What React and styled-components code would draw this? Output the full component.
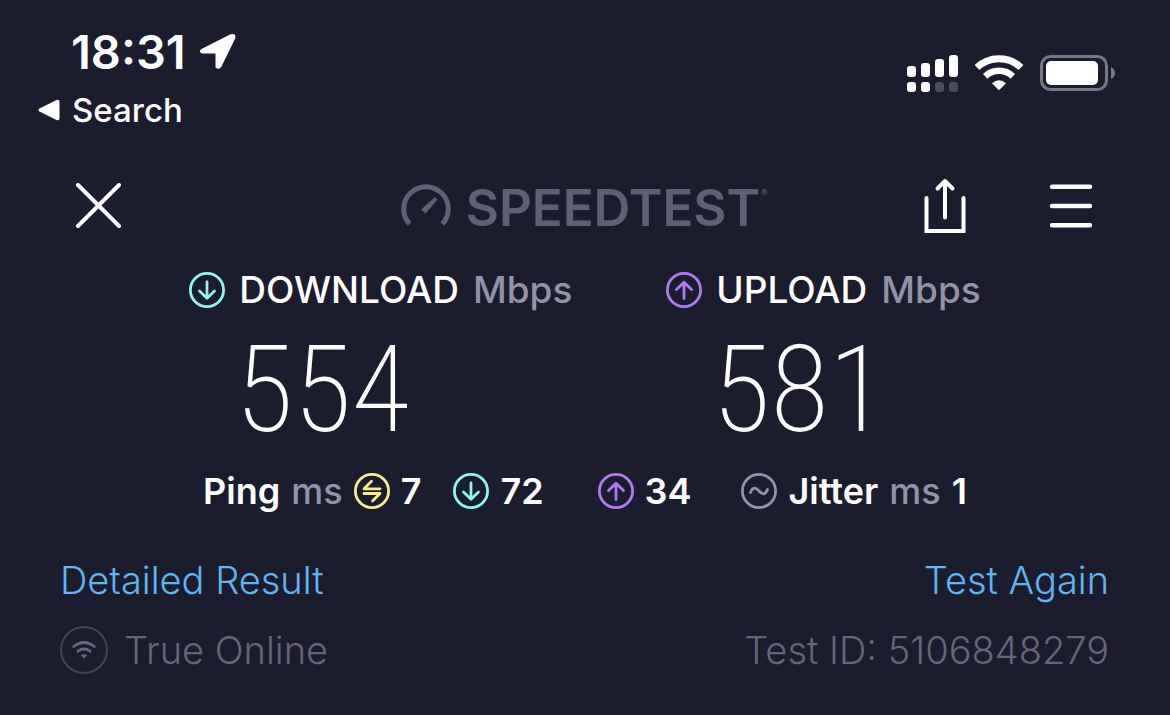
import React from "react";
import styled, { createGlobalStyle } from "styled-components";

const GlobalStyle = createGlobalStyle`
  * {
    box-sizing: border-box;
  }
  body {
    margin: 0;
    min-height: 100vh;
    background-color: #1b1c2d;
    color: #fff;
    font-family: Inter, "Liberation Sans", sans-serif;
  }
`;

const StatusBar = styled.header`
  display: flex;
  justify-content: space-between;
  align-items: center;
  padding: 28px 54px 0 38px;
  .clock {
    display: flex;
    align-items: center;
    gap: 13px;
    padding-left: 33px;
    font-size: 47px;
    line-height: 48px;
    font-weight: 600;
  }
  .indicators {
    display: flex;
    align-items: center;
    gap: 16px;
    padding-bottom: 10px;
  }
  svg {
    display: block;
  }
`;

const BackLink = styled.a`
  display: flex;
  align-items: center;
  gap: 12px;
  margin-top: 16px;
  color: #fff;
  font-size: 33px;
  line-height: 36px;
  font-weight: 500;
  text-decoration: none;
`;

const NavBar = styled.nav`
  display: grid;
  grid-template-columns: 1fr auto 1fr;
  align-items: center;
  margin-top: 50px;
  padding: 0 77px 0 75px;
  .actions {
    display: flex;
    justify-content: flex-end;
    gap: 83px;
  }
`;

const IconButton = styled.button`
  display: block;
  justify-self: start;
  padding: 0;
  border: none;
  background: none;
  color: #fff;
  cursor: pointer;
  svg {
    display: block;
  }
`;

const Logo = styled.div`
  display: flex;
  align-items: center;
  gap: 15px;
  color: #5f6073;
  font-size: 51px;
  line-height: 56px;
  font-weight: 600;
  span {
    padding-top: 4px;
    line-height: 52px;
  }
  sup {
    align-self: flex-start;
    margin: 10px 0 0 -14px;
    font-size: 9px;
    line-height: 10px;
    font-weight: 600;
  }
`;

const Results = styled.main`
  display: flex;
  justify-content: center;
  gap: 94px;
  margin-top: 38px;
`;

const Label = styled.h2`
  display: flex;
  align-items: center;
  gap: 14px;
  margin: 0;
  font-size: 37px;
  line-height: 36px;
  font-weight: 500;
`;

const Unit = styled.span`
  color: #9193a8;
  font-weight: 500;
`;

const Speed = styled.div`
  padding-left: 46px;
  font-family: "Roboto Condensed", Roboto, sans-serif;
  font-size: 120px;
  line-height: 165px;
  font-weight: 200;
`;

const Stats = styled.div`
  display: flex;
  justify-content: center;
  font-size: 36px;
  line-height: 36px;
  font-weight: 600;
`;

const Stat = styled.div`
  display: flex;
  align-items: center;
  gap: 11px;
  margin-right: ${(props) => props.$after || "0"};
`;

const Footer = styled.footer`
  display: flex;
  flex-direction: column;
  gap: 22px;
  margin-top: 47px;
  padding: 0 61px 0 60px;
  font-size: 38px;
  line-height: 48px;
  font-weight: 300;
`;

const FooterRow = styled.div`
  display: flex;
  justify-content: space-between;
  color: #656679;
  a {
    color: #5eb5f2;
    text-decoration: none;
  }
`;

const Provider = styled.span`
  display: flex;
  align-items: center;
  gap: 16px;
`;

const ARROWS = {
  down: "M18 10V26M10.5 19L18 26.3L25.5 19",
  up: "M18 26.5V10.5M10.5 17.5L18 10.2L25.5 17.5",
  ping: "M26 15.8H10L17.5 8.3M10 20.5H26L18.5 28",
  jitter: "M9.5 19.5C11.5 14 14.5 14 18 18S24.5 22 26.5 16.5",
};

const RoundIcon = ({ type, color }) => (
  <svg
    width="36"
    height="36"
    viewBox="0 0 36 36"
    fill="none"
    stroke={color}
    strokeWidth="2.8"
    strokeLinecap="round"
    strokeLinejoin="round"
  >
    <circle cx="18" cy="18" r="16.6" />
    <path d={ARROWS[type]} />
  </svg>
);

const LocationIcon = () => (
  <svg width="38" height="38" viewBox="0 0 38 38" fill="#fff">
    <path d="M2.5 16L31.5 1.3Q37.5 -0.5 36.2 5.5L22.5 33.5Q20 37.5 16.5 34.5V20.5H3Q-1 18.5 2.5 16Z" />
  </svg>
);

const BackIcon = () => (
  <svg width="22" height="22" viewBox="0 0 22 22" fill="#fff">
    <path d="M1.5 9.5L18.5 1Q21.5 0 21.5 3V19Q21.5 22 18.5 21L1.5 12.5Q-0.5 11 1.5 9.5Z" />
  </svg>
);

const SignalIcon = () => (
  <svg width="51" height="38" viewBox="0 0 51 38" fill="#fff">
    <rect x="0" y="12" width="9" height="11" rx="3" />
    <rect x="14" y="9" width="9" height="14" rx="3" />
    <rect x="28" y="5" width="9" height="18" rx="3" />
    <rect x="42" y="1" width="9" height="22" rx="3" />
    <rect x="0" y="28" width="9" height="10" rx="3" />
    <rect x="14" y="28" width="9" height="10" rx="3" />
    <rect x="28" y="28" width="9" height="10" rx="3" fill="#4a4b5b" />
    <rect x="42" y="28" width="9" height="10" rx="3" fill="#4a4b5b" />
  </svg>
);

const WifiIcon = () => (
  <svg width="50" height="37" viewBox="0 0 50 37" fill="none" stroke="#fff">
    <path d="M3 12.5A32 32 0 0 1 47 12.5" strokeWidth="7" />
    <path d="M11.2 21.3A20 20 0 0 1 38.8 21.3" strokeWidth="6.5" />
    <path
      d="M18 28.300Q25 22.300 32 28.300L25.8 34.600Q25 35.300 24.2 34.600Z"
      fill="#fff"
      stroke="none"
    />
  </svg>
);

const BatteryIcon = () => (
  <svg width="76" height="36" viewBox="0 0 76 36" fill="none">
    <rect
      x="1.5"
      y="1.5"
      width="65"
      height="33"
      rx="9"
      stroke="#767786"
      strokeWidth="3"
    />
    <rect x="6" y="6" width="52" height="24" rx="5" fill="#fff" />
    <path d="M71 12Q75 14 75 18T71 24Z" fill="#767786" />
  </svg>
);

const GaugeIcon = () => (
  <svg width="50" height="44" viewBox="0 0 50 44">
    <path
      d="M8.5 40A22.3 22.3 0 1 1 41.5 40"
      fill="none"
      stroke="currentColor"
      strokeWidth="5"
    />
    <path d="M34 13L36.5 15.5L24.5 29.5L20 25.5Z" fill="currentColor" />
  </svg>
);

const CloseIcon = () => (
  <svg
    width="47"
    height="47"
    viewBox="0 0 47 47"
    stroke="currentColor"
    strokeWidth="4"
    strokeLinecap="round"
  >
    <path d="M3 2L44 43M44 2L3 43" />
  </svg>
);

const ShareIcon = () => (
  <svg
    width="42"
    height="56"
    viewBox="0 0 42 56"
    fill="none"
    stroke="currentColor"
    strokeWidth="4"
    strokeLinecap="round"
    strokeLinejoin="round"
  >
    <path d="M2.5 20V53H39.5V20" strokeLinejoin="miter" />
    <path d="M21 39.5V3.5M13.5 10.5L21 3L28.5 10.5" />
  </svg>
);

const MenuIcon = () => (
  <svg
    width="44"
    height="56"
    viewBox="0 0 44 56"
    stroke="currentColor"
    strokeWidth="4.4"
    strokeLinecap="round"
  >
    <path d="M3 8.7H41M3 28H41M3 47.2H41" />
  </svg>
);

const ProviderIcon = () => (
  <svg
    width="48"
    height="48"
    viewBox="0 0 48 48"
    fill="none"
    stroke="#656679"
    strokeWidth="2.8"
    strokeLinecap="round"
  >
    <circle cx="24" cy="24" r="23" stroke="#444556" strokeWidth="2" />
    <path d="M13.5 20.5Q24 12.5 34.5 20.5" />
    <path d="M17.8 25.2Q24 20.8 30.2 25.2" />
    <path
      d="M22 29.5Q24 28.3 26 29.5L24 31.6Z"
      strokeWidth="1.5"
      fill="#656679"
    />
  </svg>
);

const results = [
  { name: "DOWNLOAD", type: "down", color: "#8ff5ed", value: 554 },
  { name: "UPLOAD", type: "up", color: "#b07bf0", value: 581 },
];

const App = () => {
  return (
    <>
      <GlobalStyle />
      <StatusBar>
        <div>
          <div className="clock">
            18:31
            <LocationIcon />
          </div>
          <BackLink href="#search">
            <BackIcon />
            Search
          </BackLink>
        </div>
        <div className="indicators">
          <SignalIcon />
          <WifiIcon />
          <BatteryIcon />
        </div>
      </StatusBar>
      <NavBar>
        <IconButton aria-label="Close">
          <CloseIcon />
        </IconButton>
        <Logo>
          <GaugeIcon />
          <span>SPEEDTEST</span>
          <sup>®</sup>
        </Logo>
        <div className="actions">
          <IconButton aria-label="Share">
            <ShareIcon />
          </IconButton>
          <IconButton aria-label="Menu">
            <MenuIcon />
          </IconButton>
        </div>
      </NavBar>
      <Results>
        {results.map((item) => (
          <section key={item.name}>
            <Label>
              <RoundIcon type={item.type} color={item.color} />
              {item.name}
              <Unit>Mbps</Unit>
            </Label>
            <Speed>{item.value}</Speed>
          </section>
        ))}
      </Results>
      <Stats>
        <Stat $after="32px">
          Ping <Unit>ms</Unit>
          <RoundIcon type="ping" color="#fbeb8f" />7
        </Stat>
        <Stat $after="54px">
          <RoundIcon type="down" color="#8ff5ed" />
          72
        </Stat>
        <Stat $after="50px">
          <RoundIcon type="up" color="#b07bf0" />
          34
        </Stat>
        <Stat>
          <RoundIcon type="jitter" color="#9193a8" />
          Jitter <Unit>ms</Unit> 1
        </Stat>
      </Stats>
      <Footer>
        <FooterRow>
          <a href="#details">Detailed Result</a>
          <a href="#test">Test Again</a>
        </FooterRow>
        <FooterRow>
          <Provider>
            <ProviderIcon />
            True Online
          </Provider>
          <span>Test ID: 5106848279</span>
        </FooterRow>
      </Footer>
    </>
  );
};

export default App;
